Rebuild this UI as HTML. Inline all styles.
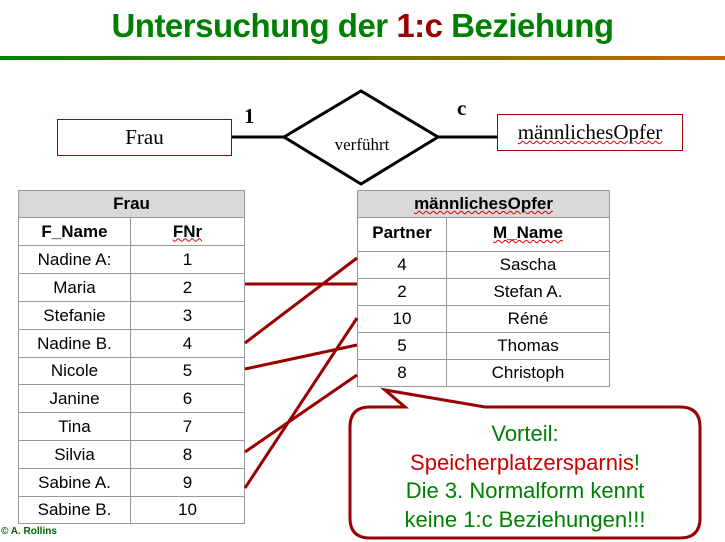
<!DOCTYPE html>
<html><head><meta charset="utf-8"><style>
body{margin:0;width:725px;height:542px;background:#fff;position:relative;overflow:hidden;font-family:"Liberation Sans",sans-serif}
.a{position:absolute}
.t{left:0;width:725px;top:7px;text-align:center;font-weight:bold;font-size:33px;color:#008000;letter-spacing:-0.5px}
.bar{left:0;top:56px;width:725px;height:4px;background:linear-gradient(90deg,#008000,#cc6600)}
table{position:absolute;border-collapse:collapse;font-size:17px;color:#000}
td{border:1px solid #999;text-align:center;padding:0}
.h{background:#d9d9d9;font-weight:bold}
.b{font-weight:bold}
.w{text-decoration:underline wavy #d00;text-decoration-thickness:1px}
.sv{font-family:"Liberation Serif",serif}
</style></head><body>
<div class="a t">Untersuchung der <span style="color:#990000">1:c</span> Beziehung</div>
<div class="a bar"></div>
<div class="a sv" style="left:57px;top:119px;width:173px;height:35px;border:1px solid #990000;font-size:21px;line-height:35px;text-align:center">Frau</div>
<div class="a sv" style="left:497px;top:114px;width:184px;height:35px;border:1px solid #990000;font-size:21px;line-height:35px;text-align:center"><span class="w">männlichesOpfer</span></div>
<div class="a sv" style="left:244px;top:104px;font-weight:bold;font-size:21px">1</div>
<div class="a sv" style="left:457px;top:96px;font-weight:bold;font-size:21px">c</div>
<svg class="a" style="left:0;top:0" width="725" height="542">
<line x1="232" y1="137" x2="284" y2="137" stroke="#000" stroke-width="3"/>
<line x1="438" y1="137" x2="497" y2="137" stroke="#000" stroke-width="3"/>
<polygon points="284,137 361,91 438,137 361,184" fill="#fff" stroke="#000" stroke-width="3"/>
<text x="362" y="150" font-family="Liberation Serif" font-size="17" text-anchor="middle">verführt</text>
</svg>
<table style="left:18px;top:190px;width:227px">
<tr style="height:27px"><td colspan="2" class="h">Frau</td></tr>
<tr style="height:28px" class="b"><td style="width:111px">F_Name</td><td><span class="w">FNr</span></td></tr>
<tr style="height:28px"><td>Nadine A:</td><td>1</td></tr>
<tr style="height:28px"><td>Maria</td><td>2</td></tr>
<tr style="height:28px"><td>Stefanie</td><td>3</td></tr>
<tr style="height:28px"><td>Nadine B.</td><td>4</td></tr>
<tr style="height:27px"><td>Nicole</td><td>5</td></tr>
<tr style="height:28px"><td>Janine</td><td>6</td></tr>
<tr style="height:28px"><td>Tina</td><td>7</td></tr>
<tr style="height:28px"><td>Silvia</td><td>8</td></tr>
<tr style="height:28px"><td>Sabine A.</td><td>9</td></tr>
<tr style="height:27px"><td>Sabine B.</td><td>10</td></tr>
</table>
<table style="left:357px;top:190px;width:253px">
<tr style="height:27px"><td colspan="2" class="h"><span class="w">männlichesOpfer</span></td></tr>
<tr style="height:34px;vertical-align:top" class="b"><td style="width:88px;padding-top:5px">Partner</td><td style="padding-top:5px"><span class="w">M_Name</span></td></tr>
<tr style="height:27px"><td>4</td><td>Sascha</td></tr>
<tr style="height:27px"><td>2</td><td>Stefan A.</td></tr>
<tr style="height:27px"><td>10</td><td>Réné</td></tr>
<tr style="height:27px"><td>5</td><td>Thomas</td></tr>
<tr style="height:27px"><td>8</td><td>Christoph</td></tr>
</table>
<svg class="a" style="left:0;top:0" width="725" height="542">
<g stroke="#990000" stroke-width="3" fill="none">
<line x1="245" y1="284" x2="357" y2="284"/>
<line x1="245" y1="343" x2="357" y2="258"/>
<line x1="245" y1="369" x2="357" y2="345"/>
<line x1="245" y1="452" x2="357" y2="375"/>
<line x1="245" y1="488" x2="357" y2="318"/>
<path d="M405,407 L385,390 L485,407 L680,407 Q700,407 700,427 L700,518 Q700,538 680,538 L370,538 Q350,538 350,518 L350,427 Q350,407 370,407 Z" fill="#fff"/>
</g>
</svg>
<div class="a" style="left:350px;top:420px;width:350px;text-align:center;font-size:22px;line-height:28.5px;color:#008000">Vorteil:<br><span style="color:#cc0000">Speicherplatzersparnis</span>!<br>Die 3. Normalform kennt<br>keine 1:c Beziehungen!!!</div>
<div class="a" style="left:1px;top:526px;font-size:10px;font-weight:bold;color:#006000">© A. Rollins</div>
</body></html>
